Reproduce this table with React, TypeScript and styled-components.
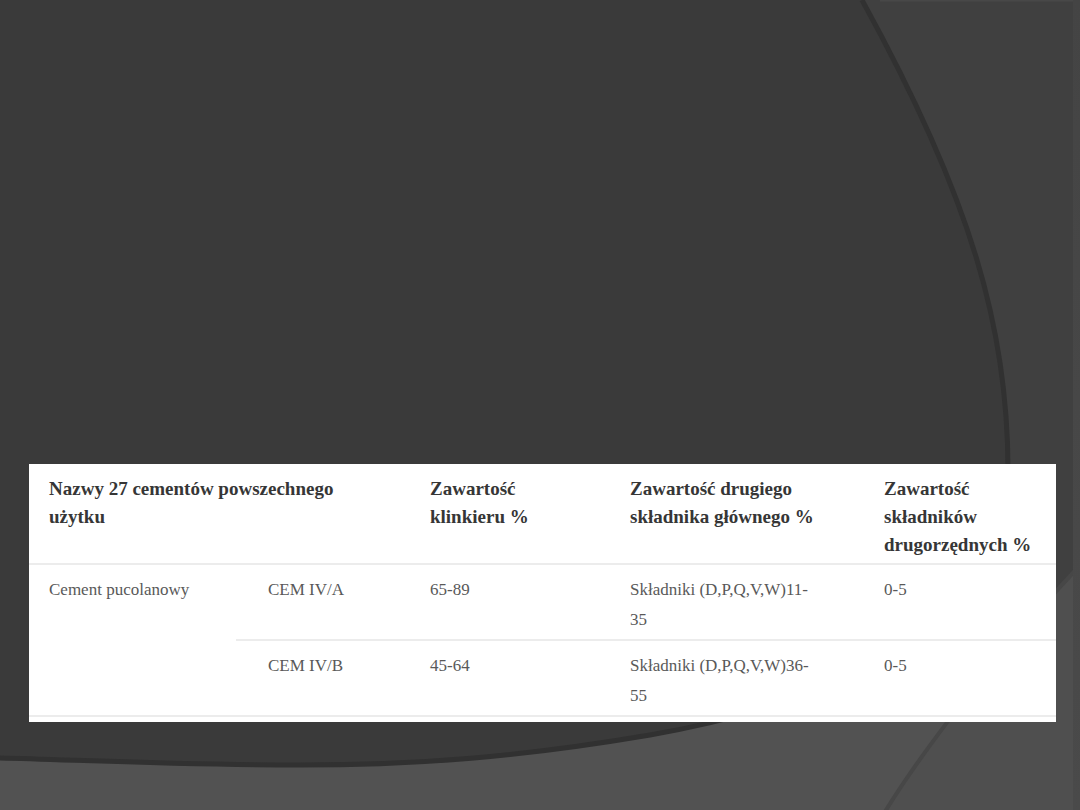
import { Fragment } from "react";
import styled, { createGlobalStyle } from "styled-components";

const GlobalStyle = createGlobalStyle`
  html,
  body {
    margin: 0;
    padding: 0;
    background: #525252;
  }
`;

const Slide = styled.div`
  position: relative;
  width: 1080px;
  height: 810px;
  overflow: hidden;
  box-sizing: border-box;
  padding: 464px 24px 0 29px;
  background: #525252;
`;

const Backdrop = styled.svg`
  position: absolute;
  inset: 0;
  width: 1080px;
  height: 810px;
`;

const Table = styled.div`
  position: relative;
  z-index: 1;
  display: grid;
  grid-template-columns: 207px 174px 200px 254px 192px;
  grid-template-rows: 101px 76px 76px;
  align-content: start;
  width: 1027px;
  height: 258px;
  background: #ffffff;
  font-family: "Liberation Serif", "Times New Roman", serif;
`;

const Cell = styled.div<{
  $head?: boolean;
  $indent?: number;
  $span?: number;
  $rows?: number;
}>`
  grid-column: span ${({ $span }) => $span ?? 1};
  grid-row: span ${({ $rows }) => $rows ?? 1};
  box-sizing: border-box;
  padding: ${({ $head }) => ($head ? "10.5px" : "9.5px")} 8px 0
    ${({ $indent }) => $indent ?? 20}px;
  border-bottom: 2px solid #ececec;
  font-size: ${({ $head }) => ($head ? "19px" : "17px")};
  font-weight: ${({ $head }) => ($head ? 700 : 400)};
  line-height: ${({ $head }) => ($head ? "28px" : "30px")};
  color: ${({ $head }) => ($head ? "#363636" : "#595959")};
  white-space: nowrap;
`;

const rows = [
  { type: "CEM IV/A", clinker: "65-89", main: ["Składniki (D,P,Q,V,W)11-", "35"] },
  { type: "CEM IV/B", clinker: "45-64", main: ["Składniki (D,P,Q,V,W)36-", "55"] },
];

const Lines = ({ lines }: { lines: string[] }) => (
  <>
    {lines.map((line, i) => (
      <div key={i}>{line}</div>
    ))}
  </>
);

export default function App() {
  return (
    <>
      <GlobalStyle />
      <Slide>
        <Backdrop viewBox="0 0 1080 810">
          <defs>
            <linearGradient id="strip" x1="0" y1="0" x2="0" y2="1">
              <stop offset="0" stopColor="#444444" />
              <stop offset="1" stopColor="#4a4a4a" />
            </linearGradient>
          </defs>
          <rect width="1080" height="810" fill="#525252" />
          <path d="M700 0 H1085 V720 H700 Z" fill="#404040" />
          <path d="M883 815 C915 762 990 660 1085 560 V815 Z" fill="#4f4f4f" />
          <path
            d="M883 815 C915 762 990 660 1085 560"
            fill="none"
            stroke="#474747"
            strokeWidth="4"
          />
          <rect x="880" y="0" width="200" height="1.5" fill="#484848" />
          <path
            d="M0 0 H862 C972 200 1008 330 1008 470 C1008 620 850 700 650 735 C520 757 420 765 300 765 C180 765 80 760 0 758 Z"
            fill="#3a3a3a"
          />
          <path
            d="M862 0 C972 200 1008 330 1008 470 C1008 620 850 700 650 735 C520 757 420 765 300 765 C180 765 80 760 0 758"
            fill="none"
            stroke="#313131"
            strokeWidth="5"
          />
          <rect x="1073" y="0" width="7" height="810" fill="url(#strip)" />
        </Backdrop>

        <Table>
          <Cell $head $span={2}>
            <Lines lines={["Nazwy 27 cementów powszechnego", "użytku"]} />
          </Cell>
          <Cell $head>
            <Lines lines={["Zawartość", "klinkieru %"]} />
          </Cell>
          <Cell $head>
            <Lines lines={["Zawartość drugiego", "składnika głównego %"]} />
          </Cell>
          <Cell $head>
            <Lines lines={["Zawartość", "składników", "drugorzędnych %"]} />
          </Cell>

          <Cell $rows={2}>Cement pucolanowy</Cell>
          {rows.map((row) => (
            <Fragment key={row.type}>
              <Cell $indent={32}>{row.type}</Cell>
              <Cell>{row.clinker}</Cell>
              <Cell>
                <Lines lines={row.main} />
              </Cell>
              <Cell>0-5</Cell>
            </Fragment>
          ))}
        </Table>
      </Slide>
    </>
  );
}
